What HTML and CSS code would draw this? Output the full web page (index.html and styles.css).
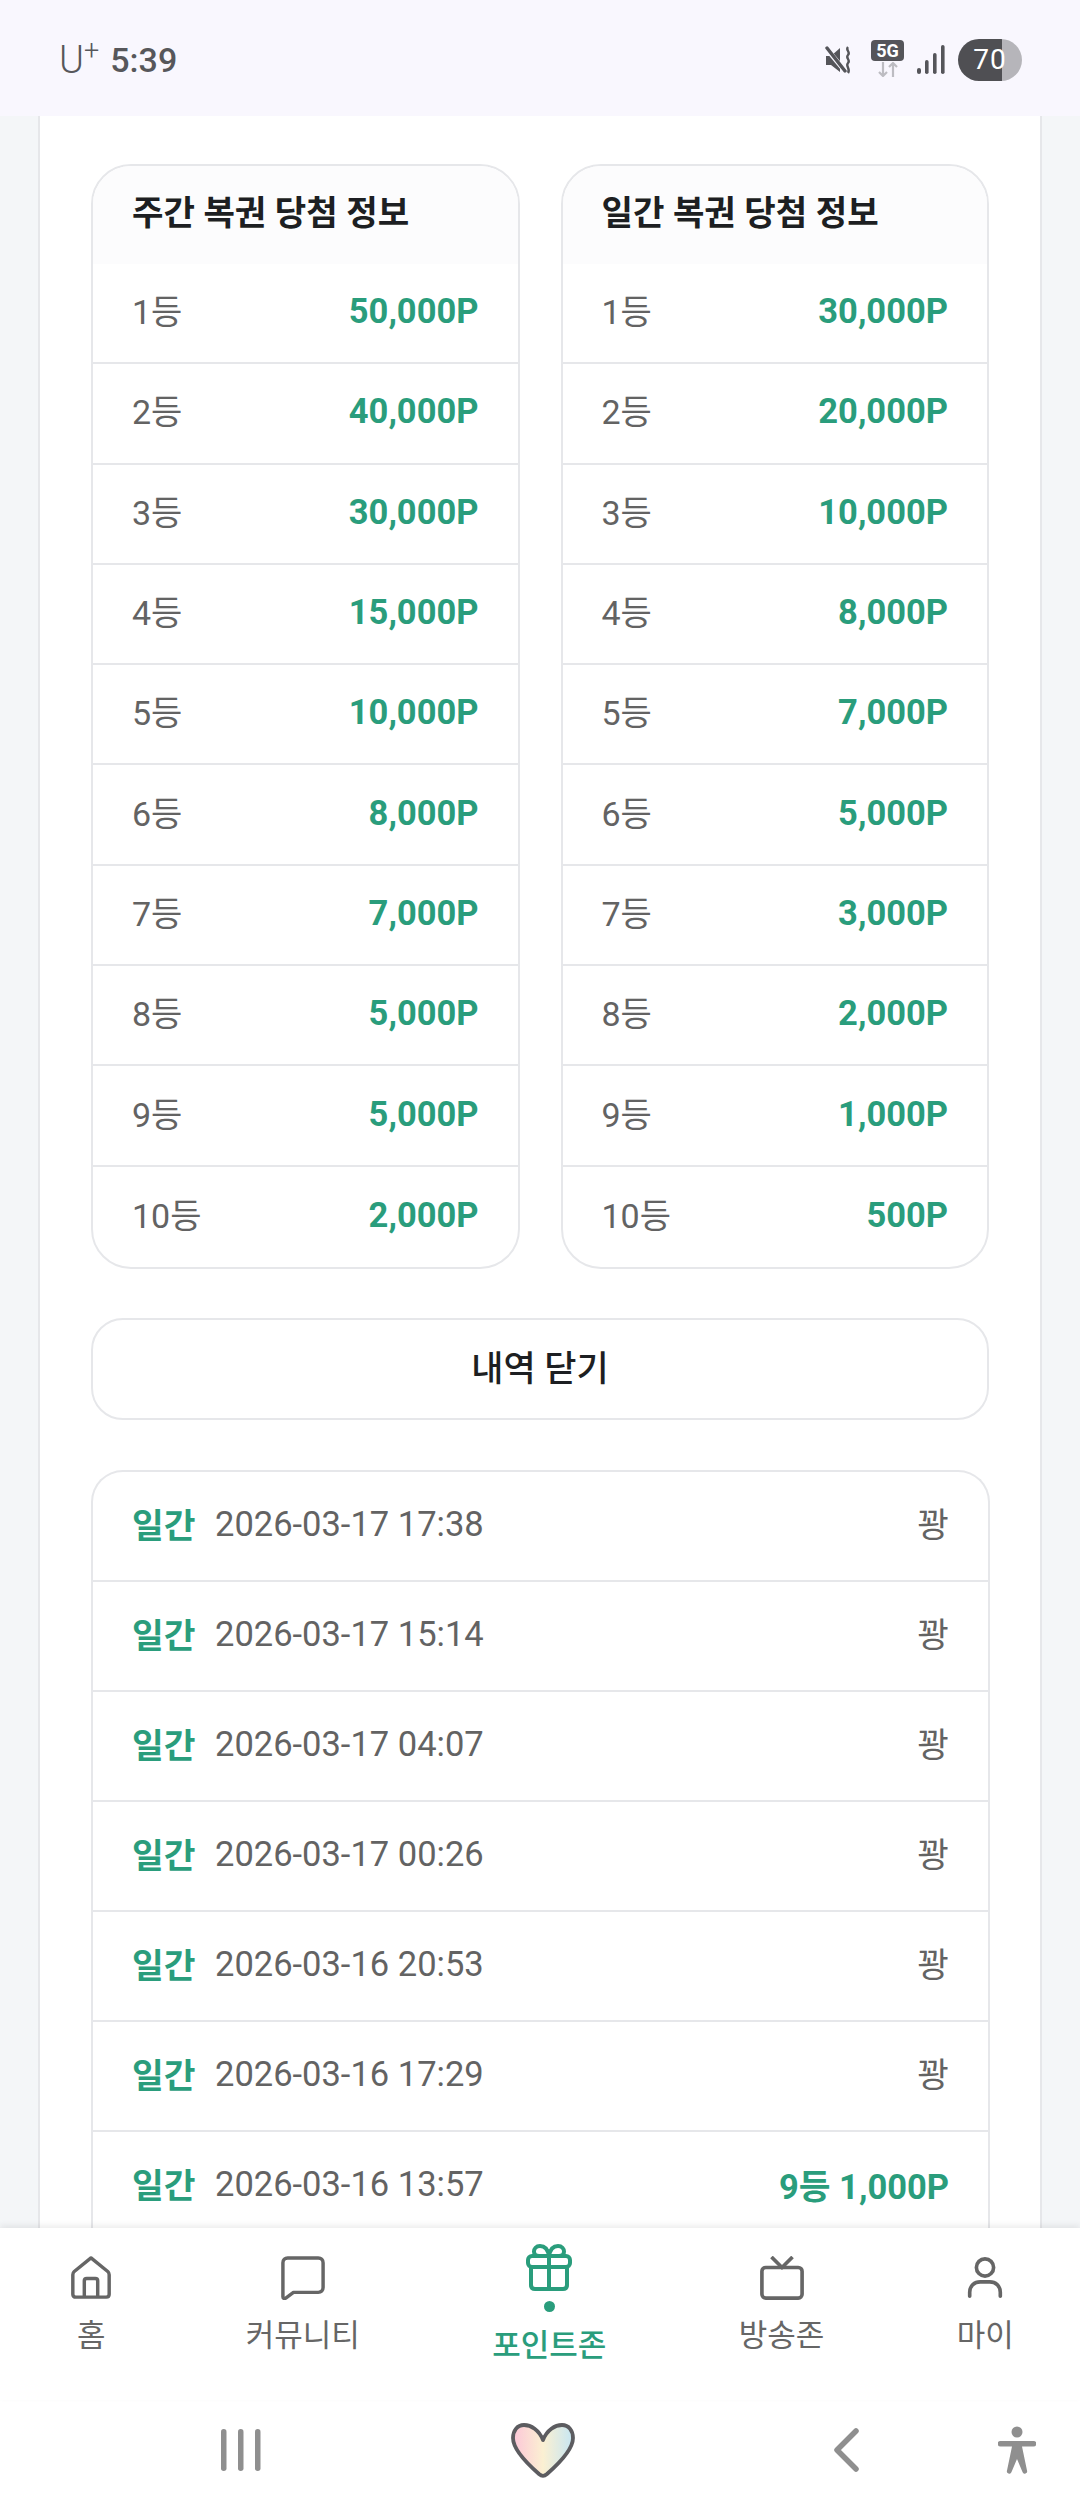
FILE: index.html
```html
<!DOCTYPE html>
<html lang="ko">
<head>
<meta charset="utf-8">
<title>포인트존</title>
<link rel="stylesheet" href="styles.css">
</head>
<body>
<div class="screen">
  <header class="status">
    <div class="status-left"><span class="carrier">U<sup>+</sup></span><span class="clock">5:39</span></div>
    <div class="status-right">
      <svg class="ic-mute" viewBox="0 0 30 28"><path d="M1 10h5l9-8v24l-9-7H1z" fill="#55555a"/><path d="M1 2l19 23" stroke="#f9f7fe" stroke-width="5"/><path d="M2 2l18 23" stroke="#55555a" stroke-width="3.4" stroke-linecap="round"/><path d="M23 1c-3 3 3 5 0 8s3 5 0 8 3 6 0 10" fill="none" stroke="#55555a" stroke-width="2.4"/></svg>
      <div class="net"><span class="fiveg">5G</span><svg class="ic-arrows" viewBox="0 0 24 15"><path d="M7 0v14M3 10l4 4 4-4M17 15V1M13 5l4-4 4 4" fill="none" stroke="#bdbcc2" stroke-width="2.2"/></svg></div>
      <svg class="ic-signal" viewBox="0 0 28 30"><g fill="#55555a"><rect x="0" y="23" width="4" height="6" rx="2"/><rect x="8" y="15" width="3.6" height="14" rx="1.8"/><rect x="16" y="8" width="3.6" height="21" rx="1.8"/><rect x="24" y="0" width="3.6" height="29" rx="1.8"/></g></svg>
      <div class="battery"><span class="batt-num">70</span></div>
    </div>
  </header>

  <main class="main">
    <section class="panel">
      <div class="prize-grid">
        <div class="prize-card">
          <h2 class="prize-title">주간 복권 당첨 정보</h2>
          <div class="prize-row"><span>1등</span><b>50,000P</b></div>
          <div class="prize-row"><span>2등</span><b>40,000P</b></div>
          <div class="prize-row"><span>3등</span><b>30,000P</b></div>
          <div class="prize-row"><span>4등</span><b>15,000P</b></div>
          <div class="prize-row"><span>5등</span><b>10,000P</b></div>
          <div class="prize-row"><span>6등</span><b>8,000P</b></div>
          <div class="prize-row"><span>7등</span><b>7,000P</b></div>
          <div class="prize-row"><span>8등</span><b>5,000P</b></div>
          <div class="prize-row"><span>9등</span><b>5,000P</b></div>
          <div class="prize-row"><span>10등</span><b>2,000P</b></div>
        </div>
        <div class="prize-card">
          <h2 class="prize-title">일간 복권 당첨 정보</h2>
          <div class="prize-row"><span>1등</span><b>30,000P</b></div>
          <div class="prize-row"><span>2등</span><b>20,000P</b></div>
          <div class="prize-row"><span>3등</span><b>10,000P</b></div>
          <div class="prize-row"><span>4등</span><b>8,000P</b></div>
          <div class="prize-row"><span>5등</span><b>7,000P</b></div>
          <div class="prize-row"><span>6등</span><b>5,000P</b></div>
          <div class="prize-row"><span>7등</span><b>3,000P</b></div>
          <div class="prize-row"><span>8등</span><b>2,000P</b></div>
          <div class="prize-row"><span>9등</span><b>1,000P</b></div>
          <div class="prize-row"><span>10등</span><b>500P</b></div>
        </div>
      </div>

      <button class="close-btn">내역 닫기</button>

      <div class="history">
        <div class="hist-row"><b class="kind">일간</b><span class="date">2026-03-17 17:38</span><span class="result">꽝</span></div>
        <div class="hist-row"><b class="kind">일간</b><span class="date">2026-03-17 15:14</span><span class="result">꽝</span></div>
        <div class="hist-row"><b class="kind">일간</b><span class="date">2026-03-17 04:07</span><span class="result">꽝</span></div>
        <div class="hist-row"><b class="kind">일간</b><span class="date">2026-03-17 00:26</span><span class="result">꽝</span></div>
        <div class="hist-row"><b class="kind">일간</b><span class="date">2026-03-16 20:53</span><span class="result">꽝</span></div>
        <div class="hist-row"><b class="kind">일간</b><span class="date">2026-03-16 17:29</span><span class="result">꽝</span></div>
        <div class="hist-row"><b class="kind">일간</b><span class="date">2026-03-16 13:57</span><span class="result win">9등 1,000P</span></div>
      </div>
    </section>
  </main>

  <nav class="tabbar">
    <a class="tab">
      <svg class="tab-icon" viewBox="0 0 44 46"><path d="M3 19.5c0-1.3.5-2.4 1.5-3.3L22 2l17.500 14.200c1 .9 1.500 2 1.500 3.300V40c0 2-1.200 3-3 3H6c-1.800 0-3-1-3-3z" fill="none" stroke="#666" stroke-width="3.600" stroke-linejoin="round"/><path d="M15 43V26c0-1.500.8-2.500 2.500-2.500h9c1.700 0 2.500 1 2.500 2.500v17" fill="none" stroke="#666" stroke-width="3.600"/></svg>
      <span>홈</span>
    </a>
    <a class="tab">
      <svg class="tab-icon" viewBox="0 0 46 46"><path d="M2 7c0-3 2-5 5-5h32c3 0 5 2 5 5v26c0 3-2 5-5 5H13L5 44c-1.500 1-3 .3-3-1.500z" fill="none" stroke="#666" stroke-width="3.600" stroke-linejoin="round"/></svg>
      <span>커뮤니티</span>
    </a>
    <a class="tab active">
      <svg class="tab-icon gift" viewBox="0 0 46 47"><g fill="none" stroke="#2a9d7c" stroke-width="4" stroke-linejoin="round" stroke-linecap="round"><rect x="2" y="12" width="42" height="11" rx="4"/><path d="M5 23v18c0 3 2 4 4 4h28c2 0 4-1 4-4V23M23 12v33"/><path d="M23 12c-1-6-4-10-9-10-4 0-6 3-6 5.500 0 3 2 4.500 5 4.500M23 12c1-6 4-10 9-10 4 0 6 3 6 5.500 0 3-2 4.500-5 4.500"/></g></svg>
      <i class="dot"></i>
      <span>포인트존</span>
    </a>
    <a class="tab">
      <svg class="tab-icon" viewBox="0 0 46 46"><rect x="2" y="12" width="42" height="32" rx="4" fill="none" stroke="#666" stroke-width="3.800"/><path d="M12 1l11 11L34 1" fill="none" stroke="#666" stroke-width="3.800"/></svg>
      <span>방송존</span>
    </a>
    <a class="tab">
      <svg class="tab-icon" viewBox="0 0 46 46"><circle cx="23" cy="12" r="9" fill="none" stroke="#666" stroke-width="3.800"/><path d="M7 42v-4c0-7 5-11 11-11h10c6 0 11 4 11 11v4" fill="none" stroke="#666" stroke-width="3.800" stroke-linecap="round"/></svg>
      <span>마이</span>
    </a>
  </nav>

  <footer class="sysnav">
    <svg class="sys-bars" viewBox="0 0 40 44"><g fill="#8f8f8f"><rect x="0" y="1" width="5.500" height="42" rx="2.700"/><rect x="17" y="1" width="5.500" height="42" rx="2.700"/><rect x="34" y="1" width="5.500" height="42" rx="2.700"/></g></svg>
    <svg class="sys-heart" viewBox="0 0 64 55"><defs><linearGradient id="hg" x1="0" x2="1" y1="0" y2="0"><stop offset="0" stop-color="#fcc6d8"/><stop offset=".5" stop-color="#fbf0d2"/><stop offset="1" stop-color="#c6e6f3"/></linearGradient></defs><path d="M32 17C28 7 20 2 13 2 6 2 2 8 2 15c0 13 18 29 26 36 3 2.500 5 2.500 8 0 8-7 26-23 26-36 0-7-4-13-11-13-7 0-15 5-19 15z" fill="url(#hg)" stroke="#5c5c60" stroke-width="3.800" stroke-linejoin="round"/></svg>
    <svg class="sys-back" viewBox="0 0 26 44"><path d="M23 3L4 22l19 19" fill="none" stroke="#8f8f8f" stroke-width="5.500" stroke-linecap="round" stroke-linejoin="round"/></svg>
    <svg class="sys-access" viewBox="0 0 38 48"><g fill="#8f8f8f"><circle cx="19" cy="6" r="5.500"/><path d="M2.500 15h33a2.500 2.500 0 010 5.500H24l5 24a2.300 2.300 0 01-4.500 1.500L19 33l-5.500 13A2.300 2.300 0 019 44.500l5-24H2.500a2.500 2.500 0 010-5.500z"/></g></svg>
  </footer>
</div>
</body>
</html>
```

FILE: styles.css
```css
* { box-sizing: border-box; }
html, body { margin: 0; padding: 0; }
body { font-family: Roboto, "Noto Sans CJK KR", sans-serif; background: #fff; }
.screen { width: 1080px; height: 2520px; display: flex; flex-direction: column; overflow: hidden; }

.status { height: 116px; flex: none; background: #f9f7fe; display: flex; justify-content: space-between; align-items: center; padding: 3px 58px 0 59px; color: #57575b; }
.status-left { display: flex; align-items: center; gap: 11px; }
.carrier { font-size: 38px; font-weight: 300; line-height: 44px; }
.carrier sup { font-size: 27px; line-height: 0; vertical-align: 13px; }
.clock { font-size: 34px; font-weight: 500; line-height: 44px; }
.status-right { display: flex; align-items: center; }
.ic-mute { width: 30px; height: 28px; margin-right: 16px; }
.net { display: flex; flex-direction: column; align-items: center; width: 33px; margin-right: 13px; margin-top: -2px; }
.fiveg { width: 33px; height: 21px; background: #55555a; color: #fff; border-radius: 4px; font-size: 18px; font-weight: 700; line-height: 21px; text-align: center; }
.ic-arrows { width: 24px; height: 15px; margin-top: 1px; }
.ic-signal { width: 28px; height: 30px; margin-right: 13px; }
.battery { width: 64px; height: 42px; border-radius: 21px; background: linear-gradient(90deg, #4f4f53 0 44px, #b6b5ba 44px); display: flex; align-items: center; justify-content: center; }
.batt-num { color: #fff; font-size: 28px; font-weight: 400; letter-spacing: 1px; }

.main { flex: 1; min-height: 0; overflow: hidden; background: #f4f6f8; padding: 0 38px; }
.panel { background: #fff; border: solid #e6e7ea; border-width: 0 2px; padding: 48px 50px 0 51px; }

.prize-grid { display: grid; grid-template-columns: 428.500px 428.500px; column-gap: 41px; }
.prize-card { border: 2px solid #e6e7ea; border-radius: 40px; overflow: hidden; background: #fff; }
.prize-title { margin: 0; height: 98px; padding: 16px 0 0 39px; background: #fcfcfd; font-size: 34.200px; line-height: 62px; font-weight: 700; color: #1d1f22; }
.prize-row { height: 100.3px; display: flex; justify-content: space-between; align-items: center; padding: 0 39px 4px; border-bottom: 2px solid #e6e7ea; font-size: 34px; }
.prize-row:last-child { border-bottom: 0; }
.prize-row span { color: #636363; margin-bottom: 3px; }
.prize-row b { color: #2a9d7c; font-weight: 700; font-size: 34.500px; }

.close-btn { display: block; width: 898px; height: 102px; margin-top: 49px; background: #fff; border: 2px solid #e6e7ea; border-radius: 32px; font-family: inherit; font-size: 35px; font-weight: 500; color: #1d1f22; padding: 0 0 6px; }

.history { margin-top: 50px; border: 2px solid #e6e7ea; border-radius: 32px 32px 0 0; border-bottom: 0; }
.hist-row { height: 110px; display: flex; align-items: center; padding: 0 39px 4px; border-bottom: 2px solid #e6e7ea; font-size: 34.500px; }
.kind { color: #2a9d7c; font-weight: 700; font-size: 34.500px; width: 83px; flex: none; margin-bottom: 2px; }
.date { color: #636363; flex: 1; }
.result { color: #636363; margin-bottom: 3px; }
.result.win { color: #2a9d7c; font-weight: 700; margin-bottom: 0; }

.tabbar { height: 172px; flex: none; background: #fff; display: flex; justify-content: space-around; align-items: flex-start; padding: 0 0 0 3px; box-shadow: 0 -3px 6px rgba(0,0,0,.07); z-index: 1; }
.tab { display: flex; flex-direction: column; align-items: center; color: #666; font-size: 31px; line-height: 40px; padding-top: 28px; }
.tab-icon { width: 44px; height: 44px; margin-bottom: 16px; display: block; }
.tab.active { color: #2a9d7c; font-weight: 500; padding-top: 16px; }
.tab-icon.gift { width: 46px; height: 47px; margin-bottom: 10px; }
.dot { width: 11px; height: 11px; border-radius: 50%; background: #2a9d7c; margin-bottom: 14px; }

.sysnav { height: 120px; flex: none; background: #fff; display: flex; align-items: center; padding-bottom: 20px; }
.sys-bars { width: 40px; height: 44px; margin-left: 221px; }
.sys-heart { width: 64px; height: 55px; margin-left: 250px; }
.sys-back { width: 26px; height: 44px; margin-left: 258px; }
.sys-access { width: 38px; height: 48px; margin-left: 139px; }
```
